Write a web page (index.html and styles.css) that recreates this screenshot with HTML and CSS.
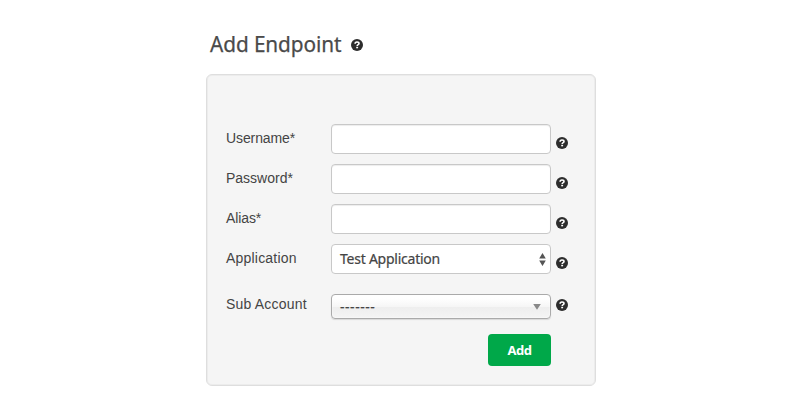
FILE: index.html
```html
<!DOCTYPE html>
<html lang="en">
<head>
<meta charset="utf-8">
<title>Add Endpoint</title>
<link rel="stylesheet" href="styles.css">
</head>
<body>
<svg class="defs" width="0" height="0" aria-hidden="true">
  <symbol id="help" viewBox="0 0 12 12">
    <circle cx="6" cy="6" r="6" fill="#2d2d2d"/>
    <path d="M4.1 4.8C4.1 3.5 4.9 3 6 3s2 .6 2 1.6C8 5.7 6.2 5.6 6.2 7" fill="none" stroke="#fff" stroke-width="1.6"/>
    <path d="M5.2 7.8h1.9v1.5H5.2z" fill="#fff"/>
  </symbol>
</svg>
<main class="page">
  <header class="heading">
    <h1 class="title">Add Endpoint</h1>
    <svg class="help"><use href="#help"/></svg>
  </header>
  <form class="panel">
    <div class="row">
      <label class="label snug" for="username">Username*</label>
      <input class="field" id="username" type="text">
      <svg class="help"><use href="#help"/></svg>
    </div>
    <div class="row">
      <label class="label" for="password">Password*</label>
      <input class="field" id="password" type="password">
      <svg class="help"><use href="#help"/></svg>
    </div>
    <div class="row">
      <label class="label snug" for="alias">Alias*</label>
      <input class="field" id="alias" type="text">
      <svg class="help"><use href="#help"/></svg>
    </div>
    <div class="row">
      <span class="label wide">Application</span>
      <div class="field select">
        <span class="app-name">Test Application</span>
        <svg class="stepper" viewBox="0 0 7 13"><path d="M3.5 0L6.8 5.5H.2zM.2 7.5h6.6L3.5 13z" fill="#555"/></svg>
      </div>
      <svg class="help"><use href="#help"/></svg>
    </div>
    <div class="row row-sub">
      <span class="label wide">Sub Account</span>
      <div class="field chosen">
        <span class="dashes">-------</span>
        <svg class="caret" viewBox="0 0 8 6"><path d="M.2 0h7.6L4 5.8z" fill="#888"/></svg>
      </div>
      <svg class="help"><use href="#help"/></svg>
    </div>
    <button class="add" type="button">Add</button>
  </form>
</main>
</body>
</html>
```
FILE: styles.css
```css
* { box-sizing: border-box; }
body {
  margin: 0;
  background: #fff;
  color: #444;
  font-family: "Liberation Sans", Arial, sans-serif;
}
.defs { display: none; }
.page { width: 390px; margin-left: 206px; padding-top: 28px; }
.heading { display: flex; align-items: center; height: 34px; padding-left: 4px; margin-bottom: 12px; }
.title {
  width: 141px;
  margin: 0;
  padding-bottom: 3px;
  font: 400 22px/31px "Noto Sans", sans-serif;
  letter-spacing: -0.1px;
  white-space: nowrap;
  color: #4a4a4a;
  -webkit-text-stroke: 0.25px #4a4a4a;
  transform: scaleX(.945);
  transform-origin: left;
}
.help { display: block; width: 12px; height: 12px; flex: none; }
.panel {
  height: 312px;
  padding: 49px 19px 0;
  border: 1px solid #dedede;
  border-radius: 6px;
  background: #f5f5f5;
  box-shadow: inset 0 0 0 1px #ececec;
}
.row { display: flex; height: 30px; margin-bottom: 10px; }
.row .help { margin: 13px 0 0 5px; }
.label { width: 105px; font-size: 14px; line-height: 28px; white-space: nowrap; }
.snug { letter-spacing: -0.1px; }
.wide { letter-spacing: 0.2px; }
.field {
  width: 220px;
  height: 30px;
  padding: 0 8px;
  border: 1px solid #c8c8c8;
  border-radius: 4px;
  background: #fff;
  box-shadow: inset 0 1px 1px rgba(0, 0, 0, .075);
}
.select { display: flex; align-items: center; justify-content: space-between; padding-right: 4px; box-shadow: none; }
.app-name { font: 14px/28px "Noto Sans", sans-serif; letter-spacing: -0.24px; -webkit-text-stroke: 0.2px #444; }
.stepper { width: 7px; height: 13px; }
.row-sub { height: 26px; margin: 20px 0 14px; }
.row-sub .label { line-height: 20px; }
.row-sub .help { margin-top: 5px; }
.chosen {
  display: flex;
  align-items: center;
  justify-content: space-between;
  height: 25px;
  padding-right: 9px;
  border-color: #aaa;
  background: linear-gradient(#fff 15%, #f6f6f6 50%, #eee 52%, #f4f4f4 100%);
  box-shadow: inset 0 0 2px #fff, 0 1px 1px rgba(0, 0, 0, .12);
}
.dashes { font: 14px/23px "Noto Sans", sans-serif; letter-spacing: 0.55px; -webkit-text-stroke: 0.2px #444; }
.caret { width: 8px; height: 6px; }
.add {
  display: block;
  width: 63px;
  height: 32px;
  margin-left: 262px;
  padding: 0;
  border: 0;
  border-radius: 4px;
  background: #00a849;
  color: #fff;
  font: 700 13px/32px "Noto Sans", sans-serif;
  letter-spacing: -0.5px;
}
```
